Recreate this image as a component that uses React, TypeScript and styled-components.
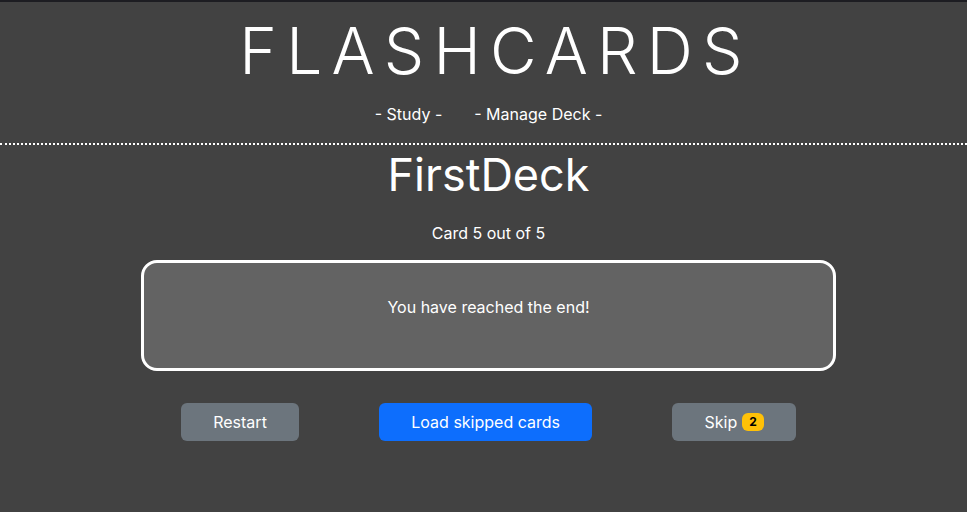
import React from 'react';
import styled, { createGlobalStyle } from 'styled-components';

const GlobalStyle = createGlobalStyle`
    html, body {
        margin: 0;
        padding: 0;
        background: #424242;
    }
    body {
        font-family: Inter, "Noto Sans", "Liberation Sans", sans-serif;
        color: #ffffff;
        font-size: 16px;
        line-height: 1.5;
        border-top: 2px solid #1d1d22;
    }
`;

const Header = styled.header`
    display: flex;
    flex-direction: column;
    align-items: center;
    border-bottom: 2px dotted #ffffff;
    padding: 0 0 17px 10px;
`;

const Title = styled.h1`
    margin: 10px 0 0;
    font-size: 64px;
    font-weight: 300;
    letter-spacing: 9.2px;
    line-height: 77px;
    padding-left: 14px;
`;

const Nav = styled.nav`
    display: flex;
    gap: 32px;
    margin-top: 13px;
`;

const NavLink = styled.a`
    color: #ffffff;
    text-decoration: none;
    cursor: pointer;
`;

const Main = styled.main`
    display: flex;
    flex-direction: column;
    align-items: center;
    padding-left: 10px;
`;

const DeckName = styled.h2`
    margin: 2px 0 0;
    font-size: 45px;
    font-weight: 400;
    line-height: 56px;
`;

const Progress = styled.p`
    margin: 18px 0 0;
`;

const Card = styled.div`
    box-sizing: border-box;
    width: 695px;
    margin-top: 15px;
    padding: 32px 16px 33px;
    background: #636363;
    border: 3px solid #ffffff;
    border-radius: 16px;
    text-align: center;
`;

const CardText = styled.p`
    margin: 0 0 16px;
`;

const Controls = styled.div`
    width: 695px;
    display: flex;
    justify-content: space-around;
    margin-top: 32px;
`;

const Button = styled.button<{ $variant: 'primary' | 'secondary' }>`
    display: inline-flex;
    align-items: center;
    gap: 5px;
    height: 38px;
    padding: 6px 32px;
    border: none;
    border-radius: 6px;
    font-family: inherit;
    font-size: 16px;
    color: #ffffff;
    background: ${(p) => (p.$variant === 'primary' ? '#0d6efd' : '#6c757d')};
    cursor: pointer;
`;

const Badge = styled.span`
    display: inline-block;
    padding: 3px 7px;
    border-radius: 6px;
    background: #ffc107;
    color: #000000;
    font-size: 12px;
    font-weight: 700;
    line-height: 1;
`;

export default function App() {
    const deck = { name: 'FirstDeck', current: 5, total: 5, skipped: 2 };

    return (
        <>
            <GlobalStyle />
            <Header>
                <Title>FLASHCARDS</Title>
                <Nav>
                    <NavLink>- Study -</NavLink>
                    <NavLink>- Manage Deck -</NavLink>
                </Nav>
            </Header>
            <Main>
                <DeckName>{deck.name}</DeckName>
                <Progress>Card {deck.current} out of {deck.total}</Progress>
                <Card>
                    <CardText>You have reached the end!</CardText>
                </Card>
                <Controls>
                    <Button $variant="secondary">Restart</Button>
                    <Button $variant="primary">Load skipped cards</Button>
                    <Button $variant="secondary">
                        Skip <Badge>{deck.skipped}</Badge>
                    </Button>
                </Controls>
            </Main>
        </>
    );
}
